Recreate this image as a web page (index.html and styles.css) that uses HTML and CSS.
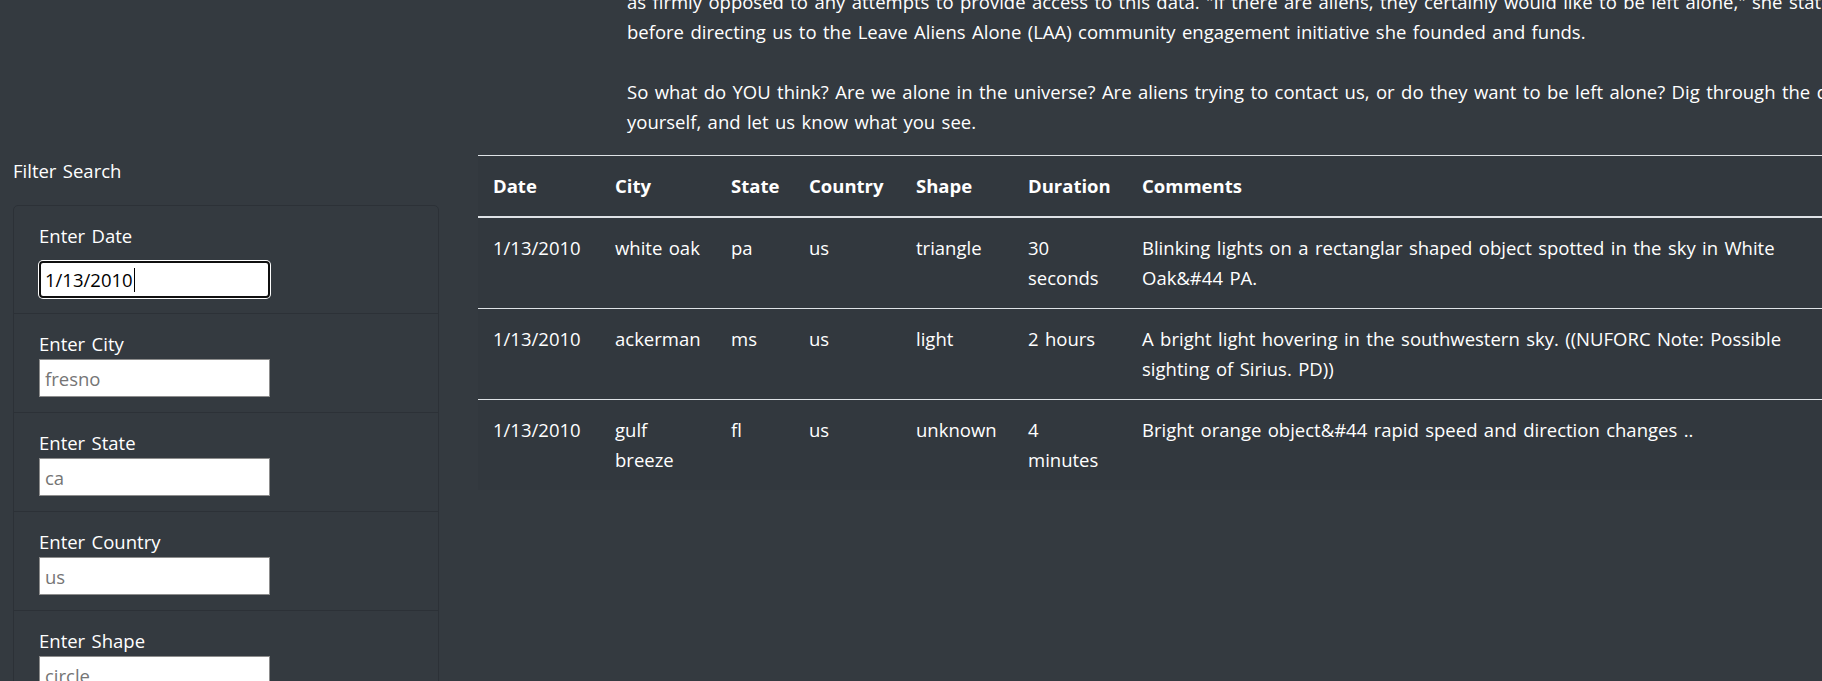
FILE: index.html
```html
<!DOCTYPE html>
<html lang="en">
<head>
<meta charset="utf-8">
<title>UFO Sightings</title>
<link rel="stylesheet" href="styles.css">
</head>
<body>
<div class="page">
  <div class="intro">
    <p>as firmly opposed to any attempts to provide access to this data.  "If there are aliens, they certainly would like to be left alone," she stated<br>before directing us to the Leave Aliens Alone (LAA) community engagement initiative she founded and funds.<br><br>So what do YOU think? Are we alone in the universe? Are aliens trying to contact us, or do they want to be left alone? Dig through the data<br>yourself, and let us know what you see.</p>
  </div>
  <div class="main">
    <aside class="sidebar">
      <div class="filter-title">Filter Search</div>
      <ul class="card">
        <li class="item first">
          <label class="label" for="datetime">Enter Date</label>
          <span class="field-wrap">
            <input class="field focused" id="datetime" type="text" value="1/13/2010">
            <span class="caret"></span>
          </span>
        </li>
        <li class="item">
          <label class="label" for="city">Enter City</label>
          <input class="field" id="city" type="text" placeholder="fresno">
        </li>
        <li class="item">
          <label class="label" for="state">Enter State</label>
          <input class="field" id="state" type="text" placeholder="ca">
        </li>
        <li class="item">
          <label class="label" for="country">Enter Country</label>
          <input class="field" id="country" type="text" placeholder="us">
        </li>
        <li class="item">
          <label class="label" for="shape">Enter Shape</label>
          <input class="field" id="shape" type="text" placeholder="circle">
        </li>
      </ul>
    </aside>
    <section class="results">
      <table class="ufo-table">
        <colgroup>
          <col class="c-date"><col class="c-city"><col class="c-state"><col class="c-country"><col class="c-shape"><col class="c-duration"><col class="c-comments">
        </colgroup>
        <thead>
          <tr><th>Date</th><th>City</th><th>State</th><th>Country</th><th>Shape</th><th>Duration</th><th>Comments</th></tr>
        </thead>
        <tbody>
          <tr><td>1/13/2010</td><td>white oak</td><td>pa</td><td>us</td><td>triangle</td><td>30<br>seconds</td><td>Blinking lights on a rectanglar shaped object spotted in the sky in White<br>Oak&amp;#44 PA.</td></tr>
          <tr><td>1/13/2010</td><td>ackerman</td><td>ms</td><td>us</td><td>light</td><td>2 hours</td><td>A bright light hovering in the southwestern sky. ((NUFORC Note: Possible<br>sighting of Sirius. PD))</td></tr>
          <tr><td>1/13/2010</td><td>gulf<br>breeze</td><td>fl</td><td>us</td><td>unknown</td><td>4<br>minutes</td><td>Bright orange object&amp;#44 rapid speed and direction changes ..</td></tr>
        </tbody>
      </table>
    </section>
  </div>
</div>
</body>
</html>
```
FILE: styles.css
```css
html, body {
  margin: 0;
  padding: 0;
  overflow: hidden;
  background: #343a40;
}
body {
  font-family: "Open Sans", "Noto Sans", sans-serif;
  font-size: 18.5px;
  line-height: 30px;
  word-spacing: 1.6px;
  color: #ffffff;
}
.page {
  width: 1900px;
}
.intro {
  margin: -13px 0 0 627px;
}
.intro p {
  margin: 0;
  white-space: nowrap;
}
.main {
  display: flex;
  align-items: flex-start;
  margin-top: 18px;
}
.sidebar {
  flex: none;
  width: 465px;
  padding-left: 13px;
}
.filter-title {
  margin: 1px 0 19px;
}
.card {
  list-style: none;
  margin: 0;
  padding: 0;
  width: 424px;
  border: 1px solid #2c3137;
  border-radius: 5px;
}
.item {
  padding: 15px 0 15px 25px;
  border-top: 1px solid #2c3137;
}
.item.first {
  border-top: 0;
}
.label {
  display: block;
  line-height: 30px;
}
.item.first .label {
  margin-bottom: 10px;
}
.field-wrap {
  position: relative;
  display: block;
  width: 231px;
}
.field {
  display: block;
  box-sizing: border-box;
  width: 231px;
  height: 38px;
  margin: 0;
  padding: 0 5px;
  border: 1px solid #8d8d8d;
  border-radius: 0;
  background: #ffffff;
  color: #000000;
  font-family: "Open Sans", "Noto Sans", sans-serif;
  font-size: 18.5px;
  outline: none;
}
.field::placeholder {
  color: #757575;
  opacity: 1;
}
.field.focused {
  height: 37px;
  border: 2px solid #101010;
  border-radius: 4px;
  box-shadow: 0 0 0 1px #ffffff;
  padding: 0 4px;
}
.caret {
  position: absolute;
  left: 95px;
  top: 7px;
  width: 1px;
  height: 24px;
  background: #000000;
}
.results {
  flex: none;
}
.ufo-table {
  border-collapse: separate;
  border-spacing: 0;
  table-layout: fixed;
  width: 1370px;
  background: #32383e;
  color: #ffffff;
}
.c-date { width: 122px; }
.c-city { width: 116px; }
.c-state { width: 78px; }
.c-country { width: 107px; }
.c-shape { width: 112px; }
.c-duration { width: 114px; }
.c-comments { width: 721px; }
.ufo-table th {
  padding: 15px;
  text-align: left;
  font-weight: 700;
  vertical-align: bottom;
  border-top: 1px solid #dee2e6;
  border-bottom: 2px solid #dee2e6;
  white-space: nowrap;
}
.ufo-table td {
  padding: 15px;
  vertical-align: top;
  border-top: 1px solid #dee2e6;
  white-space: nowrap;
}
.ufo-table tbody tr:first-child td {
  border-top: 0;
}
```
